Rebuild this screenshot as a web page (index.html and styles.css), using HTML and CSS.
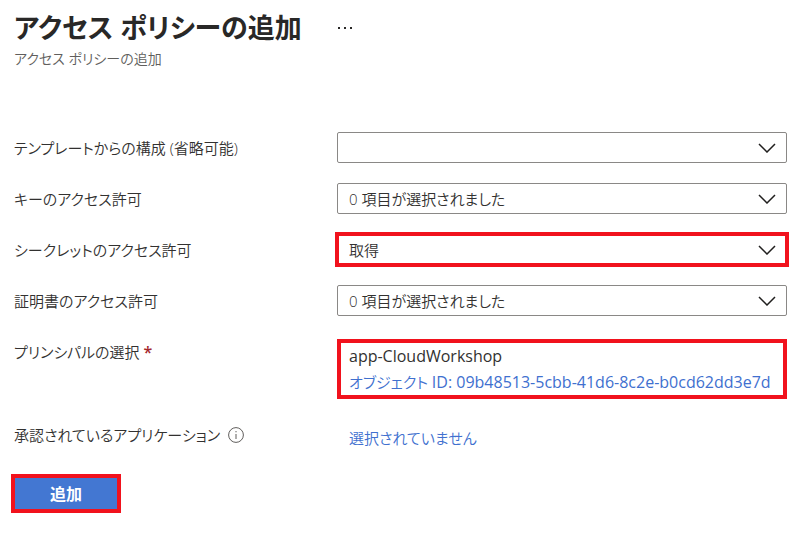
FILE: index.html
```html
<!DOCTYPE html>
<html lang="ja">
<head>
<meta charset="utf-8">
<meta name="viewport" content="width=device-width, initial-scale=1">
<title>アクセス ポリシーの追加</title>
<link rel="stylesheet" href="styles.css">
</head>
<body>
<main class="page">
  <header class="header">
    <div class="title-row">
      <h1 class="title">アクセス ポリシーの追加</h1>
      <button class="more" type="button" aria-label="その他">
        <svg width="18" height="4" viewBox="0 0 18 4" fill="currentColor" aria-hidden="true"><path d="M2 1h2v2H2zM8 1h2v2H8zM14 1h2v2h-2z"/></svg>
      </button>
    </div>
    <p class="subtitle">アクセス ポリシーの追加</p>
  </header>
  <form class="form">
    <div class="row">
      <label class="label" for="template">テンプレートからの構成 (省略可能)</label>
      <div class="field">
        <select class="select" id="template"><option></option></select>
        <svg class="chevron" width="18" height="10" viewBox="0 0 18 10" aria-hidden="true"><path d="M1 1l8 8 8-8"/></svg>
      </div>
    </div>
    <div class="row">
      <label class="label" for="keys">キーのアクセス許可</label>
      <div class="field">
        <select class="select" id="keys"><option>0 項目が選択されました</option></select>
        <svg class="chevron" width="18" height="10" viewBox="0 0 18 10" aria-hidden="true"><path d="M1 1l8 8 8-8"/></svg>
      </div>
    </div>
    <div class="row">
      <label class="label" for="secrets">シークレットのアクセス許可</label>
      <div class="field field-marked">
        <select class="select" id="secrets"><option>取得</option></select>
        <svg class="chevron" width="18" height="10" viewBox="0 0 18 10" aria-hidden="true"><path d="M1 1l8 8 8-8"/></svg>
      </div>
    </div>
    <div class="row">
      <label class="label" for="certs">証明書のアクセス許可</label>
      <div class="field">
        <select class="select" id="certs"><option>0 項目が選択されました</option></select>
        <svg class="chevron" width="18" height="10" viewBox="0 0 18 10" aria-hidden="true"><path d="M1 1l8 8 8-8"/></svg>
      </div>
    </div>
    <div class="row row-top">
      <span class="label">プリンシパルの選択 <span class="required">*</span></span>
      <div class="principal">
        <span class="latin">app-CloudWorkshop</span>
        <a class="link" href="#principal">オブジェクト <span class="latin">ID: 09b48513-5cbb-41d6-8c2e-b0cd62dd3e7d</span></a>
      </div>
    </div>
    <div class="row row-top">
      <span class="label label-info">承認されているアプリケーション
        <svg width="16" height="16" viewBox="0 0 16 16" fill="none" stroke="#605e5c" aria-hidden="true"><circle cx="8" cy="8" r="7.4"/><path d="M8 7v5M8 4v1.3"/></svg>
      </span>
      <a class="link link-app" href="#application">選択されていません</a>
    </div>
    <button class="submit" type="button">追加</button>
  </form>
</main>
</body>
</html>
```
FILE: styles.css
```css
* {
  box-sizing: border-box;
}

body {
  margin: 0;
  background: #fff;
  color: #323130;
  font-family: "Open Sans", "Noto Sans CJK JP", sans-serif;
  font-size: 15px;
  font-weight: 350;
  line-height: 26px;
  font-feature-settings: "palt";
}

.page {
  padding: 8px 13px 32px 14px;
}

.title-row {
  display: flex;
  align-items: center;
  gap: 34px;
}

.title {
  margin: 0;
  color: #292827;
  font-size: 27px;
  font-weight: 600;
  line-height: 40px;
}

.more {
  display: flex;
  padding: 0;
  border: 0;
  background: none;
  color: #292827;
}

.subtitle {
  margin: 0;
  color: #605e5c;
  font-size: 14px;
  line-height: 22px;
}

.form {
  display: flex;
  flex-direction: column;
  gap: 20px;
  margin-top: 62px;
}

.row {
  display: grid;
  grid-template-columns: 323px minmax(0, 1fr);
  align-items: center;
}

.row-top {
  align-items: start;
  margin-top: 3px;
}

.label {
  white-space: nowrap;
}

.label-info {
  display: flex;
  align-items: center;
  gap: 8px;
}

.required {
  color: #a4262c;
  font-size: 16px;
  font-weight: 600;
}

.latin {
  font-size: 16px;
  font-weight: 400;
}

.field {
  position: relative;
}

.field-marked {
  outline: 4px solid #f1121d;
  outline-offset: -2px;
}

.select {
  display: block;
  width: 100%;
  height: 31px;
  padding: 0 40px 0 11px;
  border: 1px solid #8a8886;
  border-radius: 2px;
  appearance: none;
  background: #fff;
  color: inherit;
  font: inherit;
  font-feature-settings: inherit;
}

.chevron {
  position: absolute;
  top: 11px;
  right: 11px;
  fill: none;
  stroke: #201f1e;
  stroke-width: 1.5;
  pointer-events: none;
}

.principal {
  display: flex;
  flex-direction: column;
  padding: 0 8px;
  border: 4px solid #f1121d;
}

.link {
  color: #4070cf;
  text-decoration: none;
}

.link-app {
  padding-left: 12px;
  line-height: 32px;
}

.submit {
  width: 110px;
  height: 39px;
  margin-left: -3px;
  padding: 0;
  border: 4px solid #f1121d;
  background: #4377d2;
  color: #fff;
  font: inherit;
  font-size: 16px;
  font-weight: 600;
}
```
